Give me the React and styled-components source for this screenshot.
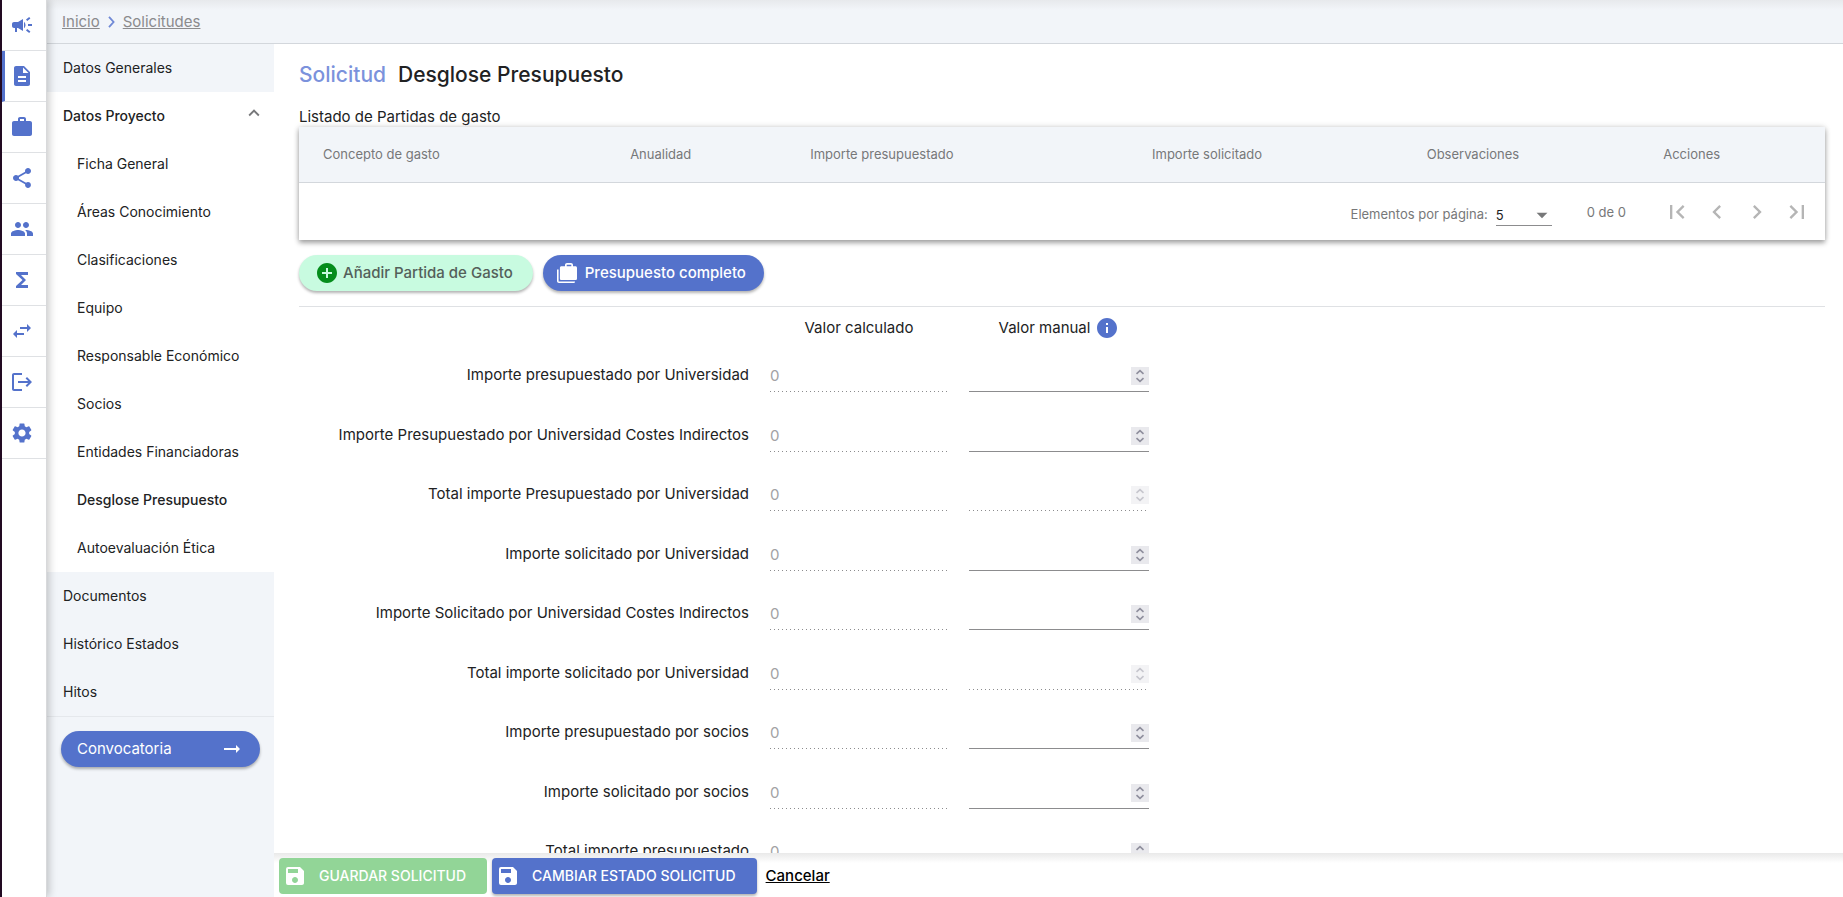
import React from "react";
import styled, { createGlobalStyle } from "styled-components";
import {
  MdCampaign, MdDescription, MdWork, MdShare, MdPeople, MdFunctions, MdSwapHoriz, MdLogout, MdSettings,
  MdExpandLess, MdArrowRightAlt, MdAddCircle, MdInfo, MdFirstPage, MdChevronLeft, MdChevronRight,
  MdLastPage, MdArrowDropDown, MdSave,
} from "react-icons/md";

const blue = "#5472cb";
const line = "#dfe1e4";
const mist = "#f2f5f9";

const GlobalStyle = createGlobalStyle`
  *, *::before, *::after { box-sizing: border-box; }
  body { margin: 0; background: #fff; color: #212223; font: 14px/20px Inter, sans-serif; }
  button, input, select { font: inherit; color: inherit; }
  button { border: 0; padding: 0; background: none; cursor: pointer; }
  svg { display: block; flex: none; }
`;

const Shell = styled.div`
  display: flex;
  height: 100vh;
  overflow: hidden;
  border-left: 2px solid #220a22;
`;

const Rail = styled.nav`
  flex: none;
  width: 45px;
  z-index: 1;
  background: #fff;
  border-right: 1px solid #d8d9db;
  box-shadow: 2px 0 8px rgba(0, 0, 0, 0.22);
`;

const RailLink = styled.a`
  display: flex;
  align-items: center;
  height: 51px;
  padding-left: ${(p) => (p.$active ? 5 : 8)}px;
  border-bottom: 1px solid ${line};
  border-left: ${(p) => (p.$active ? `3px solid ${blue}` : "0")};
  color: ${blue};
`;

const Page = styled.div`
  flex: 1;
  min-width: 0;
  display: flex;
  flex-direction: column;
`;

const Crumbs = styled.nav`
  flex: none;
  display: flex;
  align-items: center;
  gap: 8px;
  height: 44px;
  padding: 0 15px;
  border-bottom: 1px solid #d3d7dc;
  background: linear-gradient(#e7e9ec, ${mist} 10px);
  color: #7089d6;
`;

const CrumbLink = styled.a`
  color: #8b8b8d;
  font-size: 15px;
`;

const Body = styled.div`
  flex: 1;
  min-height: 0;
  display: flex;
`;

const Side = styled.aside`
  flex: none;
  width: 227px;
  background: ${mist};
`;

const SideLink = styled.a`
  display: flex;
  align-items: center;
  justify-content: space-between;
  height: 48px;
  padding: 0 9px 0 ${(p) => (p.$child ? 30 : 16)}px;
  background: ${(p) => (p.$open ? "#fff" : "transparent")};
  color: inherit;
  font-size: 14px;
  font-weight: ${(p) => (p.$strong ? 500 : 400)};
  text-decoration: none;
  svg { margin-bottom: 6px; color: #77787a; }
`;

const SideAction = styled.div`
  padding: 14px;
  border-top: 1px solid #e5e8ec;
`;

const Pill = styled.button`
  display: flex;
  align-items: center;
  gap: 4px;
  height: 36px;
  padding: 0 20px 0 16px;
  border-radius: 18px;
  background: ${(p) => (p.$green ? "#c8fbe0" : blue)};
  color: ${(p) => (p.$green ? "#54605a" : "#fff")};
  box-shadow: 0 2px 3px rgba(0, 0, 0, 0.3);
  font-size: 15px;
  font-weight: 500;
  white-space: nowrap;
`;

const BudgetPill = styled(Pill)`
  gap: 6px;
  padding: 0 18px 0 12px;
`;

const SidePill = styled(Pill)`
  justify-content: space-between;
  width: 199px;
  padding: 0 16px;
  font-weight: 400;
`;

const Main = styled.main`
  flex: 1;
  min-width: 0;
  display: flex;
  flex-direction: column;
`;

const Scroll = styled.div`
  flex: 1;
  min-height: 0;
  overflow: auto;
  scrollbar-width: none;
  padding: 16px 18px 0 25px;
`;

const Title = styled.h1`
  display: flex;
  gap: 12px;
  margin: 0 0 17px;
  font-size: 21px;
  line-height: 30px;
  font-weight: 500;
`;

const TitleArea = styled.span`
  color: #7b92dc;
`;

const ListTitle = styled.h2`
  margin: 0;
  font-size: 15px;
  line-height: 20px;
  font-weight: 400;
`;

const Card = styled.section`
  background: #fff;
  box-shadow: 0 3px 5px rgba(0, 0, 0, 0.32), 0 0 6px rgba(0, 0, 0, 0.16);
`;

const Table = styled.table`
  width: 100%;
  table-layout: fixed;
  border-collapse: collapse;
`;

const Th = styled.th`
  width: ${(p) => p.$width};
  height: 55px;
  padding: 0 0 0 ${(p) => (p.$first ? 24 : 0)}px;
  border-bottom: 1px solid #d3d7dc;
  background: ${mist};
  color: #777879;
  font-size: 13px;
  font-weight: 400;
  text-align: left;
`;

const Pager = styled.div`
  display: flex;
  align-items: center;
  justify-content: flex-end;
  height: 57px;
  padding: 2px 8px 0 0;
  color: #777879;
  font-size: 13px;
`;

const PageSize = styled.label`
  display: flex;
  align-items: center;
  gap: 8px;
  padding-top: 4px;
`;

const SelectBox = styled.span`
  display: grid;
  grid-template-columns: 1fr 20px;
  align-items: center;
  justify-items: center;
  width: 56px;
  height: 24px;
  border-bottom: 1px solid #8c8c8e;
  select {
    grid-area: 1 / 1 / 2 / 3;
    justify-self: stretch;
    appearance: none;
    border: 0;
    padding: 0;
    background: none;
    color: #212223;
  }
  svg { grid-area: 1 / 2; pointer-events: none; }
`;

const Range = styled.span`
  margin: 0 31px 0 35px;
`;

const PageButton = styled.button`
  display: grid;
  place-items: center;
  width: 40px;
  height: 40px;
  color: #b5b5b5;
`;

const Actions = styled.div`
  display: flex;
  gap: 10px;
  padding: 15px 0;
  border-bottom: 1px solid ${line};
`;

const Form = styled.form`
  display: grid;
  grid-template-columns: 450px 178px 180px;
  grid-template-rows: 42px;
  grid-auto-rows: 60px 59px;
  column-gap: 21px;
  font-size: 15px;
`;

const ColumnHead = styled.div`
  grid-column: ${(p) => p.$column};
  display: flex;
  align-items: center;
  justify-content: center;
  gap: 5px;
  svg { color: ${blue}; }
`;

const RowLabel = styled.label`
  padding-top: 16px;
  text-align: right;
  white-space: nowrap;
`;

const Field = styled.div`
  align-self: start;
  display: flex;
  align-items: center;
  height: 43px;
  padding-top: 11px;
  background: ${(p) =>
    p.$disabled
      ? "repeating-linear-gradient(90deg, #8c8c8e 0 1px, transparent 1px 4px)"
      : "linear-gradient(#8c8c8e, #8c8c8e)"} bottom / 100% 1px no-repeat;
`;

const Input = styled.input`
  flex: 1;
  min-width: 0;
  border: 0;
  padding: 0;
  outline: 0;
  background: none;
  color: #212223;
  appearance: textfield;
  &:disabled { color: #a2a2a4; }
  &::-webkit-inner-spin-button { display: none; }
`;

const Stepper = styled.svg`
  background: #e9e9ed;
  opacity: ${(p) => (p.$disabled ? 0.5 : 1)};
`;

const Footer = styled.footer`
  flex: none;
  display: flex;
  align-items: center;
  gap: 5px;
  height: 44px;
  padding: 2px 5px 0;
  background: linear-gradient(#e9e9e9, #fff 10px);
`;

const FooterButton = styled.button`
  display: flex;
  align-items: center;
  gap: 12px;
  height: 36px;
  padding: 0 21px 0 4px;
  border-radius: 4px;
  background: ${(p) => (p.disabled ? "#92d597" : blue)};
  color: #fff;
  box-shadow: ${(p) => (p.disabled ? "none" : "0 2px 3px rgba(0, 0, 0, 0.3)")};
  font-weight: 500;
  white-space: nowrap;
`;

const Cancel = styled.a`
  margin-left: 4px;
  color: #000;
  font-size: 15px;
  font-weight: 500;
`;

const rail = [
  ["Convocatorias", MdCampaign], ["Solicitudes", MdDescription], ["Proyectos", MdWork], ["Relaciones", MdShare],
  ["Grupos", MdPeople], ["Sumatorios", MdFunctions], ["Intercambios", MdSwapHoriz], ["Salidas", MdLogout],
  ["Configuración", MdSettings],
];

const projectLinks = [
  "Ficha General", "Áreas Conocimiento", "Clasificaciones", "Equipo", "Responsable Económico", "Socios",
  "Entidades Financiadoras", "Desglose Presupuesto", "Autoevaluación Ética",
];

const columns = [
  ["Concepto de gasto", "21.7%"], ["Anualidad", "11.8%"], ["Importe presupuestado", "22.4%"],
  ["Importe solicitado", "18%"], ["Observaciones", "15.5%"], ["Acciones", "10.6%"],
];

const amounts = [
  ["Importe presupuestado por Universidad"],
  ["Importe Presupuestado por Universidad Costes Indirectos"],
  ["Total importe Presupuestado por Universidad", true],
  ["Importe solicitado por Universidad"],
  ["Importe Solicitado por Universidad Costes Indirectos"],
  ["Total importe solicitado por Universidad", true],
  ["Importe presupuestado por socios"],
  ["Importe solicitado por socios"],
  ["Total importe presupuestado"],
];

function CasesIcon() {
  return (
    <svg width="24" height="24" viewBox="0 0 24 24" fill="currentColor" aria-hidden="true">
      <path d="M3.6 8.5H2V20c0 1.1.9 2 2 2h14.5c.9 0 1.5-.6 1.5-1.6H3.6z" />
      <path fillRule="evenodd" d="M18 5.3V4c0-1.1-.9-2-2-2h-4c-1.1 0-2 .9-2 2v1.3H6.5c-.9 0-1.6.7-1.6 1.6v10.5c0 .9.7 1.6 1.6 1.6h13.9c.9 0 1.6-.7 1.6-1.6V6.900c0-.9-.7-1.6-1.6-1.6zm-6.3 0V3.700h4.600v1.600z" />
    </svg>
  );
}

function AmountRow({ id, label, total }) {
  return (
    <>
      <RowLabel htmlFor={id}>{label}</RowLabel>
      <Field $disabled>
        <Input disabled defaultValue="0" aria-label={`${label}, valor calculado`} />
      </Field>
      <Field $disabled={total}>
        <Input id={id} type="number" disabled={total} />
        <Stepper $disabled={total} width="18" height="18" viewBox="0 0 18 18" fill="none" stroke="#8f8f9d" strokeWidth="1.6" aria-hidden="true">
          <path d="M5.5 6.8 9 3.6l3.5 3.2M5.5 11.2 9 14.4l3.5-3.2" />
        </Stepper>
      </Field>
    </>
  );
}

export default function App() {
  return (
    <>
      <GlobalStyle />
      <Shell>
        <Rail>
          {rail.map(([name, Icon]) => (
            <RailLink key={name} href="#" aria-label={name} $active={name === "Solicitudes"}>
              <Icon size={24} />
            </RailLink>
          ))}
        </Rail>
        <Page>
          <Crumbs>
            <CrumbLink href="#">Inicio</CrumbLink>
            <svg width="7" height="12" viewBox="0 0 7 12" fill="none" stroke="currentColor" strokeWidth="1.8"><path d="m1 .8 4.600 5.200L1 11.200" /></svg>
            <CrumbLink href="#">Solicitudes</CrumbLink>
          </Crumbs>
          <Body>
            <Side>
              <SideLink href="#">Datos Generales</SideLink>
              <SideLink href="#" $open $strong>Datos Proyecto<MdExpandLess size={22} /></SideLink>
              {projectLinks.map((name) => (
                <SideLink key={name} href="#" $open $child $strong={name === "Desglose Presupuesto"}>{name}</SideLink>
              ))}
              <SideLink href="#">Documentos</SideLink>
              <SideLink href="#">Histórico Estados</SideLink>
              <SideLink href="#">Hitos</SideLink>
              <SideAction>
                <SidePill>Convocatoria<MdArrowRightAlt size={24} /></SidePill>
              </SideAction>
            </Side>
            <Main>
              <Scroll>
                <Title><TitleArea>Solicitud</TitleArea>Desglose Presupuesto</Title>
                <ListTitle>Listado de Partidas de gasto</ListTitle>
                <Card>
                  <Table>
                    <thead>
                      <tr>
                        {columns.map(([name, width], i) => (
                          <Th key={name} scope="col" $width={width} $first={i === 0}>{name}</Th>
                        ))}
                      </tr>
                    </thead>
                  </Table>
                  <Pager>
                    <PageSize>
                      Elementos por página:
                      <SelectBox>
                        <select defaultValue="5"><option>5</option><option>10</option><option>25</option></select>
                        <MdArrowDropDown size={26} />
                      </SelectBox>
                    </PageSize>
                    <Range>0 de 0</Range>
                    <PageButton disabled aria-label="Primera página"><MdFirstPage size={28} /></PageButton>
                    <PageButton disabled aria-label="Página anterior"><MdChevronLeft size={28} /></PageButton>
                    <PageButton disabled aria-label="Página siguiente"><MdChevronRight size={28} /></PageButton>
                    <PageButton disabled aria-label="Última página"><MdLastPage size={28} /></PageButton>
                  </Pager>
                </Card>
                <Actions>
                  <Pill $green><MdAddCircle size={24} color="#058d1c" />Añadir Partida de Gasto</Pill>
                  <BudgetPill><CasesIcon />Presupuesto completo</BudgetPill>
                </Actions>
                <Form>
                  <ColumnHead $column={2}>Valor calculado</ColumnHead>
                  <ColumnHead $column={3}>Valor manual<MdInfo size={24} /></ColumnHead>
                  {amounts.map(([label, total], i) => (
                    <AmountRow key={label} id={`importe-${i}`} label={label} total={total} />
                  ))}
                </Form>
              </Scroll>
              <Footer>
                <FooterButton disabled><MdSave size={24} />GUARDAR SOLICITUD</FooterButton>
                <FooterButton><MdSave size={24} />CAMBIAR ESTADO SOLICITUD</FooterButton>
                <Cancel href="#">Cancelar</Cancel>
              </Footer>
            </Main>
          </Body>
        </Page>
      </Shell>
    </>
  );
}
